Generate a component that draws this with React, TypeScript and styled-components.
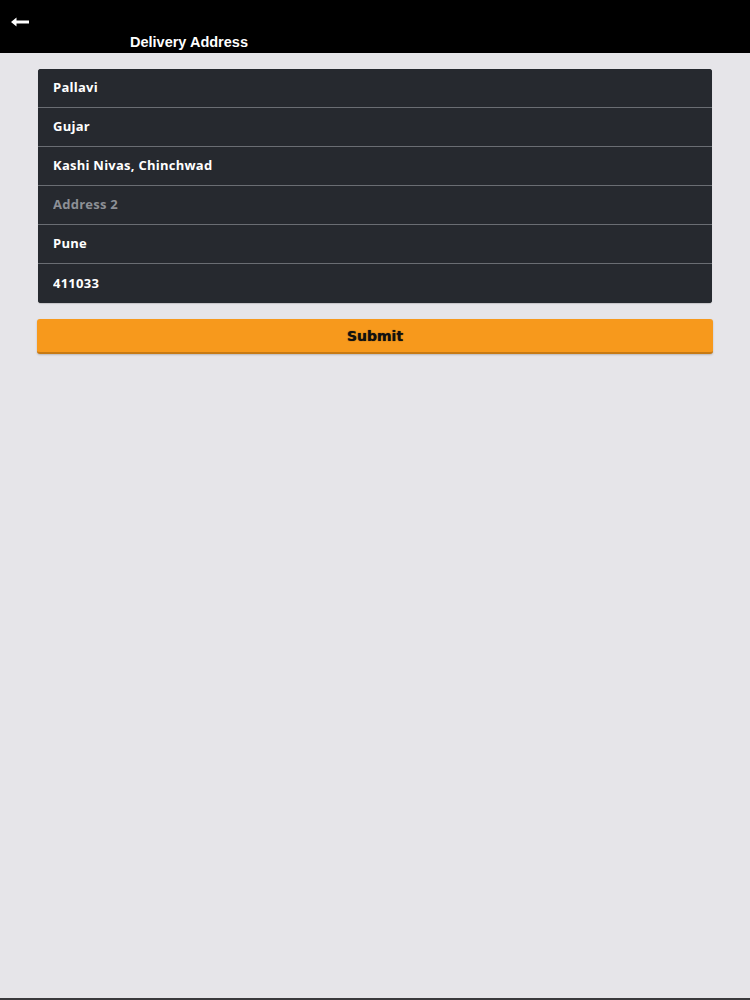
import React from 'react';
import styled, { createGlobalStyle } from 'styled-components';

const GlobalStyle = createGlobalStyle`
  html, body {
    margin: 0;
    padding: 0;
    background: #e6e5e9;
  }
`;

const Page = styled.div`
  width: 750px;
  height: 1000px;
  box-sizing: border-box;
  display: flex;
  flex-direction: column;
  background: #e6e5e9;
  border-bottom: 2px solid #3a3a3c;
  font-family: "Open Sans", "DejaVu Sans", sans-serif;
`;

const Header = styled.div`
  height: 53px;
  background: #000;
  position: relative;
  flex-shrink: 0;
`;

const BackButton = styled.button`
  position: absolute;
  left: 10px;
  top: 16px;
  width: 20px;
  height: 12px;
  padding: 0;
  border: none;
  background: transparent;
  display: flex;
  align-items: center;
  justify-content: center;
`;

const Title = styled.h1`
  position: absolute;
  left: 130px;
  top: 34px;
  margin: 0;
  color: #fff;
  font-family: "Liberation Sans", Arial, sans-serif;
  font-weight: bold;
  font-size: 14.5px;
  line-height: 17px;
`;

const Content = styled.div`
  padding: 16px 38px 0 38px;
  display: flex;
  flex-direction: column;
`;

const FieldList = styled.div`
  display: flex;
  flex-direction: column;
  background: #26292f;
  border-radius: 3px;
  overflow: hidden;
  box-shadow: 0 1px 1px rgba(0, 0, 0, 0.15);
`;

const Field = styled.input<{ $last?: boolean }>`
  height: 39px;
  box-sizing: border-box;
  border: none;
  border-bottom: ${(p) => (p.$last ? 'none' : '1px solid #6a6d73')};
  background: #26292f;
  color: #fff;
  padding: 0 15px 2px 15px;
  font-family: "Open Sans", "DejaVu Sans", sans-serif;
  font-weight: 700;
  font-size: 13px;
  letter-spacing: 0.25px;
  outline: none;

  &::placeholder {
    color: #8d9096;
  }
`;

const Submit = styled.button`
  margin: 16px -1px 0 -1px;
  height: 35px;
  border: none;
  border-radius: 3px;
  background: #f7991c;
  border-bottom: 2px solid #c77a14;
  color: #111;
  font-family: "DejaVu Sans", "Open Sans", sans-serif;
  font-weight: bold;
  font-size: 14px;
  padding-top: 2px;
  text-shadow: 0 0 1px rgba(0, 0, 0, 0.8);
  box-shadow: 0 1px 2px rgba(0, 0, 0, 0.2);
`;

const fields = [
  { value: 'Pallavi', placeholder: 'First Name' },
  { value: 'Gujar', placeholder: 'Last Name' },
  { value: 'Kashi Nivas, Chinchwad', placeholder: 'Address 1' },
  { value: '', placeholder: 'Address 2' },
  { value: 'Pune', placeholder: 'City' },
  { value: '411033', placeholder: 'Zip' },
];

const App = () => {
  return (
    <Page>
      <GlobalStyle />
      <Header>
        <BackButton aria-label="Back">
          <svg width="20" height="12" viewBox="0 0 20 12">
            <path d="M1 6 L6.5 1.5 V4.6 H19 V7.4 H6.5 V10.5 Z" fill="#fff" />
          </svg>
        </BackButton>
        <Title>Delivery Address</Title>
      </Header>
      <Content>
        <FieldList>
          {fields.map((f, i) => (
            <Field
              key={f.placeholder}
              defaultValue={f.value}
              placeholder={f.placeholder}
              $last={i === fields.length - 1}
            />
          ))}
        </FieldList>
        <Submit>Submit</Submit>
      </Content>
    </Page>
  );
};

export default App;
